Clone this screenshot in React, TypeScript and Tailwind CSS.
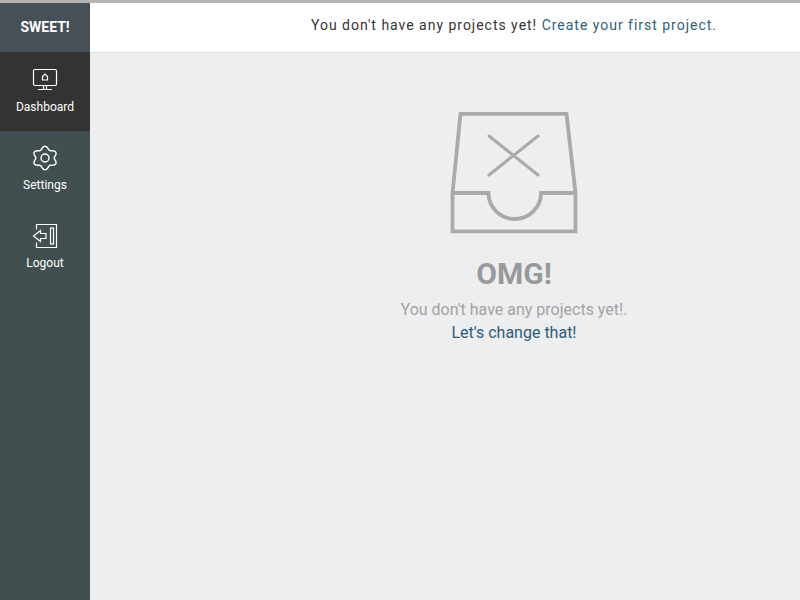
const gear = (() => {
  const pts: string[] = [];
  for (let i = 0; i < 120; i++) {
    const t = (i / 120) * Math.PI * 2;
    const r = 10.2 + 1.5 * Math.cos(6 * t);
    pts.push(`${(12 + 1.06 * r * Math.sin(t)).toFixed(2)},${(13 - r * Math.cos(t)).toFixed(2)}`);
  }
  return `M${pts.join("L")}Z`;
})();

export default function App() {
  return (
    <div className="w-[800px] h-[600px] overflow-hidden flex flex-col bg-[#edeef0] font-['Roboto',sans-serif]">
      <div className="h-[3px] bg-[#b4b4b4] shrink-0" />
      <div className="flex flex-1 min-h-0">
        <aside className="w-[90px] shrink-0 bg-[#424f50] flex flex-col text-white">
          <div className="h-[49px] bg-[#475056] flex items-center justify-center text-[14px] font-bold">SWEET!</div>
          <div className="h-[79px] bg-[#333333] flex flex-col items-center pt-[16px]">
            <svg width="26" height="24" viewBox="0 0 26 24" fill="none" stroke="white" strokeWidth="1.2">
              <rect x="1.5" y="1.5" width="23" height="16" rx="1.5" />
              <path d="M11.500 18v3.500M14.500 18v3.500M6 21.500h14" />
              <path d="M10.500 8.500L13 6l2.500 2.500V12h-5z" />
            </svg>
            <span className="text-[12px] leading-[16px] mt-[7px]">Dashboard</span>
          </div>
          <div className="h-[78px] flex flex-col items-center pt-[14px]">
            <svg width="24" height="26" viewBox="0 0 24 26" fill="none" stroke="white" strokeWidth="1.4">
              <circle cx="12" cy="13" r="4" />
              <path d={gear} />
            </svg>
            <span className="text-[12px] leading-[16px] mt-[6px]">Settings</span>
          </div>
          <div className="h-[78px] flex flex-col items-center pt-[14px]">
            <svg width="26" height="26" viewBox="0 0 26 26" fill="none" stroke="white" strokeWidth="1.2">
              <path d="M4.500 6.500V1.500h20v23h-20V19.500" />
              <rect x="18.500" y="5" width="3" height="16" />
              <path d="M14 10.500H8.500V7.500L1.500 13l7 5.500V15.500H14z" />
            </svg>
            <span className="text-[12px] leading-[16px] mt-[6px]">Logout</span>
          </div>
        </aside>
        <main className="flex-1 flex flex-col min-w-0">
          <div className="h-[50px] bg-white border-b border-[#dcdcd8] flex items-center justify-center pl-[138px] pb-[4px] text-[14px] tracking-[0.98px] text-[#333333] shrink-0">
            <span>You don't have any projects yet!&nbsp;<a className="text-[#2f6079]">Create your first project.</a></span>
          </div>
          <div className="flex flex-col items-center pl-[138px] pt-[57px]">
            <svg width="130" height="124" viewBox="0 0 130 124" fill="none" stroke="#a9aaaa" strokeWidth="3.8">
              <path d="M3.500 121.300V83L11.500 3.800H117.500L126.500 83V121.300z" />
              <path d="M3.500 83H39.500A26.250 26 0 0 0 92 83H126.500" />
              <path d="M40 26L89 65M89 26L40 65" strokeWidth="3" strokeLinecap="round" />
            </svg>
            <h1 className="text-[30px] leading-[34px] font-bold text-[#999999] mt-[23px]">OMG!</h1>
            <p className="text-[16px] leading-[23px] text-[#a3a3a3] mt-[7px]">You don't have any projects yet!.</p>
            <a className="text-[16px] leading-[23px] text-[#2f5b7c]">Let's change that!</a>
          </div>
        </main>
      </div>
    </div>
  );
}
